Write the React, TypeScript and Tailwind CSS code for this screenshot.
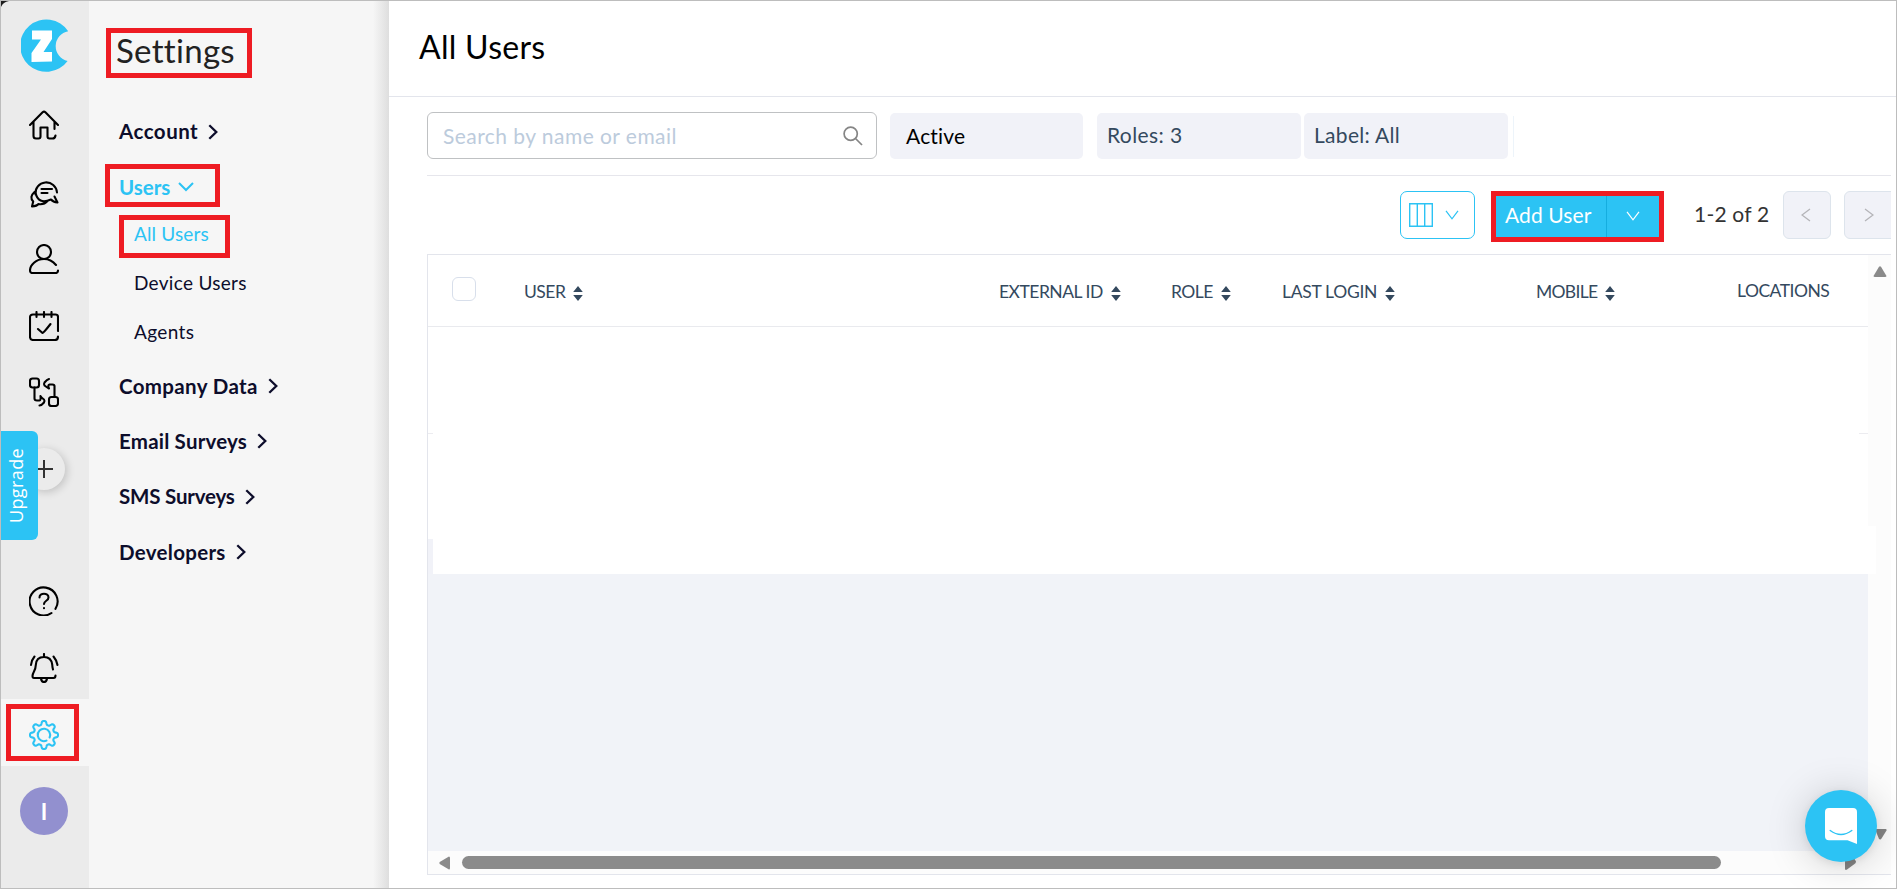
import React from 'react';

const RED = 'pointer-events-none absolute border-[5px] border-[#ee1c23]';

function RailIcon({ children, className = '' }: { children: React.ReactNode; className?: string }) {
  return (
    <svg
      viewBox="0 0 30 30"
      fill="none"
      stroke="currentColor"
      strokeWidth="2.1"
      strokeLinecap="round"
      strokeLinejoin="round"
      className={`h-[30px] w-[30px] shrink-0 ${className}`}
    >
      {children}
    </svg>
  );
}

function Logo() {
  return (
    <svg viewBox="0 0 48 53" className="ml-[2px] h-[53px] w-[48px] shrink-0">
      <path fill="#2cc3f4" d="M47.2 12.2A26.2 26.2 0 1 0 46.6 42 15.2 15.2 0 0 1 47.2 12.2Z" />
      <path fill="#fff" d="M11 11.5H31v8.5L22.5 33H31v9.5L10.5 43V34L20 20.5H11Z" />
    </svg>
  );
}

function gearPath() {
  let d = '';
  const n = 160;
  for (let i = 0; i <= n; i++) {
    const t = (i / n) * Math.PI * 2;
    const w = Math.cos(8 * t);
    const r = 12.2 + (1.8 * Math.tanh(1.8 * w)) / Math.tanh(1.8);
    d += `${i ? 'L' : 'M'}${(15 + r * Math.sin(t)).toFixed(2)} ${(15 - r * Math.cos(t)).toFixed(2)}`;
  }
  return d + 'Z';
}

function Chevron({ down = false }: { down?: boolean }) {
  return down ? (
    <svg viewBox="0 0 16 10" className="h-[10px] w-4" fill="none" stroke="currentColor" strokeWidth="2">
      <path d="M1 1l7 7 7-7" />
    </svg>
  ) : (
    <svg viewBox="0 0 10 16" className="h-4 w-[10px]" fill="none" stroke="currentColor" strokeWidth="2.3">
      <path d="M1.3 1.2l7 6.8-7 6.8" />
    </svg>
  );
}

function ThinChevron() {
  return (
    <svg viewBox="0 0 14 10" className="h-[10px] w-[14px]" fill="none" stroke="currentColor" strokeWidth="1.2">
      <path d="M1 .8l6 8 6-8" />
    </svg>
  );
}

function Section({ label, spacing }: { label: string; spacing: string }) {
  return (
    <div className="flex h-[55.4px] items-center gap-[10px] text-[#0d0d2b]">
      <span className={`text-[20.5px] font-bold ${spacing}`}>{label}</span>
      <Chevron />
    </div>
  );
}

function Header({ label, box, spacing, sortable = true }: { label: string; box: string; spacing: string; sortable?: boolean }) {
  return (
    <div className={`flex shrink-0 items-center whitespace-nowrap pt-[4px] text-[#34495e] ${box}`}>
      <span className={`text-[17.5px] ${spacing}`}>{label}</span>
      {sortable && (
        <svg viewBox="0 0 10 15" className="ml-[8px] mt-[2px] h-[15px] w-[10px]" fill="#34495e">
          <path d="M5 0l4.8 6H.2zM5 15L.2 9h9.6z" />
        </svg>
      )}
    </div>
  );
}

function Rail() {
  return (
    <nav className="relative h-full w-[88px] shrink-0 bg-[#ebebeb] text-black">
      <div className="flex w-[86px] flex-col items-center pt-[18px]">
        <Logo />
        <RailIcon className="mt-[38px]">
          <path d="M1 15L13.6 2.2Q15 1 16.4 2.2L29 15M4.5 12V26Q4.5 28.5 7 28.5H9.5Q11.500 28.5 11.5 26.5V17.5H18.5V26.5Q18.5 28.5 20.5 28.5H23.5Q26 28.5 26.5 25.5M25.5 12V19" />
        </RailIcon>
        <RailIcon className="mt-[39px]">
          <path d="M6.5 15.5A10.8 10.8 0 1 1 28 13.5M25.5 17.5L28.5 23.5Q24 23 22 20.5Q9 26 6.5 13.5M12.5 10H23M12.5 14H18.5M5.5 13Q0 18 4.2 22.5L3 27.5Q8 27 9.5 25Q15 26 18.5 22" />
        </RailIcon>
        <RailIcon className="mt-[35px]">
          <circle cx="15" cy="8" r="7" />
          <path d="M27 21Q22 15 15 15C7 15 1 21 1 26.5Q1 29 3 29H27Q29 29 29 26.5" />
        </RailIcon>
        <RailIcon className="mt-[37px]">
          <path d="M29 20V6Q29 3.5 26.5 3.5H4Q1 3.5 1 6.5V26Q1 29 4 29H26Q29 29 29 25.5M7.5 1V6M15 1V6M22.5 1V6M9 18L13.5 22Q14.500 22 21.5 13" />
        </RailIcon>
        <RailIcon className="mt-[36px]">
          <rect x="1" y="1.5" width="9" height="9" rx="2.5" />
          <rect x="20" y="20" width="9" height="9" rx="2.5" />
          <path d="M5.5 10.5V21.5Q5.5 23.5 8 23.5H10.5Q12 23.5 11.5 19Q12 20.5 15 22.5Q16 24 15 25.5Q12.5 28.5 10.5 28.5M25.5 20V9Q25.5 7.5 23.5 7.5H20.5Q18.5 8 20 11.5Q18 10.5 15.5 8.5Q14.5 7 15.5 5.5Q18 2.5 20 2" />
        </RailIcon>

        <div className="mt-[41px] flex h-[42px] w-[42px] shrink-0 items-center justify-center rounded-full bg-[#ebebeb] text-[#333] shadow-[2px_2px_8px_rgba(0,0,0,0.18)]">
          <svg viewBox="0 0 18 18" className="h-[18px] w-[18px]" stroke="currentColor" strokeWidth="2">
            <path d="M9 0V18M0 9H18" />
          </svg>
        </div>

        <RailIcon className="mt-[96px]">
          <path d="M22.5 27A14 14 0 1 1 26.5 22.8M10.5 11.5C10.5 6.5 19.5 6.5 19.5 11.5C19.5 15 15 14.5 15 18M15 22V22.3" />
        </RailIcon>
        <RailIcon className="mt-[37px]">
          <path d="M15 1V4M24 16.5C23.5 14 23.5 15 23.2 11.5C22.5 6 19 4 15 4C10 4 7 7 6.8 12C6.7 18 3.5 19 3.5 23Q3.5 25 5 25H24.5Q26.5 25 26.5 22.5M12 25.5Q12.5 29 15 29Q17.5 29 18 25.5M5.5 3.5Q2.5 7 2 12M24.5 3.5Q27.5 7 28.5 12" />
        </RailIcon>

        <div className="mt-[16px] flex h-[67px] w-[88px] shrink-0 items-center justify-center self-start bg-[#f6f6f6] pr-[2px] pt-[5px] text-[#2cc3f4]">
          <RailIcon>
            <path d={gearPath()} />
            <path d="M17.5 20.6A6.2 6.2 0 1 1 20.6 17.5" />
          </RailIcon>
        </div>
        <div className="mt-[21px] flex h-12 w-12 shrink-0 items-center justify-center rounded-full bg-[#9290cf] text-[22px] font-bold text-white">I</div>
      </div>

      <div className="absolute left-0 top-[430px] flex h-[109px] w-[37px] items-center justify-center rounded-r-[6px] bg-[#2cc3f4] pr-[5px]">
        <span className="-rotate-90 whitespace-nowrap font-['Open_Sans'] text-[18px] font-medium tracking-[0.4px] text-white">Upgrade</span>
      </div>
      <div className={`${RED} left-[5px] top-[703px] h-[57px] w-[73px]`} />
    </nav>
  );
}

function Sidebar() {
  return (
    <aside className="relative flex h-full w-[300px] shrink-0 flex-col bg-[#f6f6f6] pl-[30px]">
      <h1 className="-ml-[3px] mt-[25px] h-[50px] whitespace-nowrap pt-px text-[33px] leading-[46px] tracking-[0.3px] text-[#222]">Settings</h1>
      <div className="mt-[28px]">
        <Section label="Account" spacing="tracking-[0.5px]" />
        <div className="flex h-[55px] items-center gap-[8px] text-[#2cc3f4]">
          <span className="text-[20.5px] font-bold">Users</span>
          <Chevron down />
        </div>
        <div className="-ml-px flex flex-col pl-4 text-[19px] text-[#0d0d2b]">
          <span className="flex h-[40px] items-center tracking-[0.15px] text-[#2cc3f4]">All Users</span>
          <span className="flex h-[49px] items-center pt-[9px] tracking-[0.3px]">Device Users</span>
          <span className="flex h-[49px] items-center pt-[9px] tracking-[0.35px]">Agents</span>
        </div>
        <div className="mt-[6px]">
          <Section label="Company Data" spacing="tracking-[0.35px]" />
          <Section label="Email Surveys" spacing="tracking-[0.2px]" />
          <Section label="SMS Surveys" spacing="tracking-[-0.2px]" />
          <Section label="Developers" spacing="tracking-[0.3px]" />
        </div>
      </div>
      <div className="pointer-events-none absolute inset-y-0 right-0 w-4 bg-linear-to-r from-transparent to-[#dedede]" />
      <div className={`${RED} left-[17px] top-[27px] h-[50px] w-[146px]`} />
      <div className={`${RED} left-[16px] top-[163px] h-[43px] w-[115px]`} />
      <div className={`${RED} left-[30px] top-[214px] h-[43px] w-[111px]`} />
    </aside>
  );
}

function Filters() {
  return (
    <div className="flex h-[79px] items-start border-b border-[#e6e6ec] pt-[15px]">
      <div className="flex h-[47px] w-[450px] items-center justify-between rounded-[6px] border border-[#bfc1c3] pl-[15px] pr-[13px]">
        <span className="text-[21px] tracking-[0.45px] text-[#bccbdc]">Search by name or email</span>
        <svg viewBox="0 0 20 20" className="h-5 w-5" fill="none" stroke="#858585" strokeWidth="1.7">
          <circle cx="7.7" cy="7.7" r="6.6" />
          <path d="M12.5 12.5L19 19" />
        </svg>
      </div>
      <div className="ml-[13px] mt-px flex h-[46px] w-[193px] items-center rounded-[5px] bg-[#f1f2f8] pb-px pl-4 text-[21px] tracking-[0.2px] text-black">Active</div>
      <div className="ml-[14px] mt-px flex h-[46px] w-[204px] items-center rounded-[5px] bg-[#f1f2f8] pb-[3px] pl-[10px] text-[21px] tracking-[0.4px] text-[#34495e]">Roles: 3</div>
      <div className="ml-[3px] mt-px flex h-[46px] w-[204px] items-center rounded-[5px] bg-[#f1f2f8] pb-[3px] pl-[10px] text-[21px] tracking-[0.3px] text-[#34495e]">Label: All</div>
      <div className="ml-[5px] mt-[4px] h-[41px] w-px bg-[#edf4fa]" />
    </div>
  );
}

function Toolbar() {
  return (
    <div className="flex h-[78px] items-start overflow-hidden pl-[973px] pt-[15px]">
      <div className="flex h-12 w-[75px] shrink-0 items-center rounded-[7px] border border-[#2cc3f4] pl-2 text-[#2cc3f4]">
        <svg viewBox="0 0 24 24" className="mr-[12px] h-6 w-6" fill="none" stroke="currentColor" strokeWidth="1.4">
          <path d="M.7 .7H23.3V23.3H.7ZM8.3 1V23M15.7 1V23" />
        </svg>
        <ThinChevron />
      </div>
      <div className="ml-[16px] flex h-[51px] w-[173px] shrink-0 border-[5px] border-[#ee1c23] bg-[#2cc3f4] text-white">
        <div className="flex w-[111px] items-center border-r border-[#15addf] pb-[4px] pl-[9px] text-[21px] tracking-[0.1px]">Add User</div>
        <div className="flex flex-1 items-center justify-center pb-[2px]"><ThinChevron /></div>
      </div>
      <span className="ml-[30px] mt-[8px] w-[89px] shrink-0 whitespace-nowrap text-[21px] leading-[30px] tracking-[0.2px] text-[#333]">1-2 of 2</span>
      <div className="flex h-12 w-12 shrink-0 items-center justify-center rounded-[6px] border border-[#dde4ec] bg-[#f1f2f8] pr-[2px] text-[#b4b4b8]">
        <svg viewBox="0 0 10 14" className="h-[14px] w-[10px]" fill="none" stroke="currentColor" strokeWidth="1.3"><path d="M9 1L1 7l8 6" /></svg>
      </div>
      <div className="ml-[13px] flex h-12 w-[49px] shrink-0 items-center justify-center rounded-l-[6px] border border-[#dde4ec] bg-[#f1f2f8] text-[#b4b4b8]">
        <svg viewBox="0 0 10 14" className="h-[14px] w-[10px]" fill="none" stroke="currentColor" strokeWidth="1.3"><path d="M1 1l8 6-8 6" /></svg>
      </div>
    </div>
  );
}

function Table() {
  return (
    <div className="flex h-[621px] border-y border-l border-[#e3e5ec]">
      <div className="flex w-[1440px] shrink-0 flex-col">
        <div className="flex h-[72px] shrink-0 items-center border-b border-[#e9eaee] pl-[24px]">
          <span className="mb-[3px] h-6 w-6 shrink-0 rounded-[6px] border border-[#d8dfeb]" />
          <Header label="USER" box="ml-[48px] w-[475px]" spacing="tracking-[-0.5px]" />
          <Header label="EXTERNAL ID" box="w-[172px]" spacing="tracking-[-0.5px]" />
          <Header label="ROLE" box="w-[111px]" spacing="tracking-[-0.5px]" />
          <Header label="LAST LOGIN" box="w-[254px]" spacing="tracking-[-0.3px]" />
          <Header label="MOBILE" box="w-[201px]" spacing="tracking-[-0.7px]" />
          <Header label="LOCATIONS" box="mb-[2px] w-[120px]" spacing="tracking-[-0.5px]" sortable={false} />
        </div>
        <div className="flex h-[107px] shrink-0 items-end justify-between">
          <span className="h-px w-[5px] bg-[#ececf0]" />
          <span className="h-px w-[9px] bg-[#ececf0]" />
        </div>
        <div className="flex h-[140px] shrink-0 items-end">
          <span className="h-[35px] w-[5px] bg-[#f1f2f8]" />
        </div>
        <div className="flex-1 bg-[#f1f3f8]" />
        <div className="flex h-[23px] shrink-0 items-center bg-[#fcfcfc] pl-[11px]">
          <svg viewBox="0 0 11 14" className="h-[14px] w-[11px]" fill="#8a8a8a"><path d="M10 .5Q11 .5 11 2V12Q11 13.5 10 13.5L.7 8Q0 7 .7 6Z" /></svg>
          <div className="ml-[12px] h-[13px] w-[1259px] rounded-full bg-[#8b8b8b]" />
        </div>
      </div>
      <div className="flex flex-1 flex-col items-center bg-[#fcfcfc] pt-[11px]">
        <svg viewBox="0 0 14 11" className="h-[11px] w-[14px]" fill="#8a8a8a"><path d="M.5 10Q.5 11 2 11H12Q13.5 11 13.5 10L8 .7Q7 0 6 .7Z" /></svg>
        <div className="mt-[249px] h-[48px] w-2 self-start bg-white" />
      </div>
    </div>
  );
}

export default function App() {
  return (
    <div className="relative flex h-[889px] w-[1897px] overflow-hidden border border-[#bdbdbd] bg-white font-['Lato',sans-serif]">
      <Rail />
      <Sidebar />
      <main className="flex h-full min-w-0 flex-1 flex-col">
        <header className="flex h-[96px] shrink-0 items-center border-b border-[#e3e5ec] pb-[4px] pl-[30px]">
          <h2 className="text-[32px] tracking-[0.3px] text-black">All Users</h2>
        </header>
        <div className="pl-[38px] pr-[5px]">
          <Filters />
          <Toolbar />
          <Table />
        </div>
      </main>

      <svg viewBox="0 0 12 11" className="absolute left-[1874px] top-[828px] h-[11px] w-[12px]" fill="#858585"><path d="M0 0H11Q12 .5 11.5 1.5L6.5 9.5Q5.5 11 4 10Z" /></svg>
      <svg viewBox="0 0 11 12" className="absolute left-[1844px] top-[857px] h-[12px] w-[11px]" fill="#858585"><path d="M0 0H9L11 3.5Q11 5 9.5 6L2 11.5Q.5 12.5 0 11Z" /></svg>
      <div className="absolute left-[1804px] top-[789px] flex h-[72px] w-[72px] items-center justify-center rounded-full bg-[#2cc3f4] shadow-[0_2px_8px_rgba(0,0,0,0.08),0_3px_40px_rgba(0,0,0,0.18)]">
        <svg viewBox="0 0 32 36" className="h-9 w-8">
          <path fill="#fff" d="M4 0H28Q32 0 32 4V36L22.5 32.3H4Q0 32.3 0 28.3V4Q0 0 4 0Z" />
          <path d="M5.2 22.5Q16 30.5 26.8 22.5" fill="none" stroke="#2cc3f4" strokeWidth="1.4" strokeLinecap="round" />
        </svg>
      </div>
      <svg viewBox="0 0 8 6" className="absolute left-0 top-0 h-[6px] w-2"><path d="M0 0H8Q2 1 0 6Z" fill="#1c1c1c" /></svg>
    </div>
  );
}
